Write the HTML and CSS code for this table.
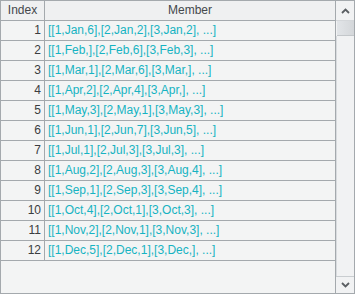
FILE: index.html
```html
<!DOCTYPE html>
<html>
<head>
<meta charset="utf-8">
<link rel="stylesheet" href="styles.css">
</head>
<body>
<div class="frame">
  <div class="table">
    <div class="row head"><div class="c idx">Index</div><div class="c mem">Member</div></div>
    <div class="row"><div class="c idx">1</div><div class="c mem">[[1,Jan,6],[2,Jan,2],[3,Jan,2], ...]</div></div>
    <div class="row"><div class="c idx">2</div><div class="c mem">[[1,Feb,],[2,Feb,6],[3,Feb,3], ...]</div></div>
    <div class="row"><div class="c idx">3</div><div class="c mem">[[1,Mar,1],[2,Mar,6],[3,Mar,], ...]</div></div>
    <div class="row"><div class="c idx">4</div><div class="c mem">[[1,Apr,2],[2,Apr,4],[3,Apr,], ...]</div></div>
    <div class="row"><div class="c idx">5</div><div class="c mem">[[1,May,3],[2,May,1],[3,May,3], ...]</div></div>
    <div class="row"><div class="c idx">6</div><div class="c mem">[[1,Jun,1],[2,Jun,7],[3,Jun,5], ...]</div></div>
    <div class="row"><div class="c idx">7</div><div class="c mem">[[1,Jul,1],[2,Jul,3],[3,Jul,3], ...]</div></div>
    <div class="row"><div class="c idx">8</div><div class="c mem">[[1,Aug,2],[2,Aug,3],[3,Aug,4], ...]</div></div>
    <div class="row"><div class="c idx">9</div><div class="c mem">[[1,Sep,1],[2,Sep,3],[3,Sep,4], ...]</div></div>
    <div class="row"><div class="c idx">10</div><div class="c mem">[[1,Oct,4],[2,Oct,1],[3,Oct,3], ...]</div></div>
    <div class="row"><div class="c idx">11</div><div class="c mem">[[1,Nov,2],[2,Nov,1],[3,Nov,3], ...]</div></div>
    <div class="row"><div class="c idx">12</div><div class="c mem">[[1,Dec,5],[2,Dec,1],[3,Dec,], ...]</div></div>
    <div class="filler"></div>
  </div>
  <div class="scroll">
    <div class="btn up"><svg width="9" height="6" viewBox="0 0 9 6"><path d="M1 5 L4.5 1.5 L8 5" fill="none" stroke="#5a5e62" stroke-width="1.8"/></svg></div>
    <div class="thumb"></div>
    <div class="track"></div>
    <div class="btn down"><svg width="9" height="6" viewBox="0 0 9 6"><path d="M1 1 L4.5 4.5 L8 1" fill="none" stroke="#5a5e62" stroke-width="1.8"/></svg></div>
  </div>
</div>
</body>
</html>
```

FILE: styles.css
```css
html, body {
  margin: 0;
  padding: 0;
  background: #f3f4f4;
}
.frame {
  display: flex;
  width: 355px;
  height: 294px;
  box-sizing: border-box;
  border: 1px solid #a4a9ad;
  background: #f3f4f4;
  font-family: "Liberation Sans", Arial, sans-serif;
  font-size: 12px;
}
.table {
  width: 335px;
  display: flex;
  flex-direction: column;
  border-right: 1px solid #a4a9ad;
}
.row {
  display: grid;
  grid-template-columns: 44px 1fr;
  height: 20px;
  box-sizing: border-box;
  border-bottom: 1px solid #a4a9ad;
}
.head {
  background: #eff0f1;
}
.c {
  line-height: 19px;
  white-space: nowrap;
  overflow: hidden;
}
.idx {
  text-align: right;
  padding-right: 3px;
  border-right: 1px solid #a4a9ad;
  color: #3a3d40;
}
.mem {
  padding-left: 3px;
  color: #16b3c2;
}
.head .c {
  text-align: center;
  color: #44484c;
  padding: 0;
}
.filler {
  flex: 1;
}
.scroll {
  width: 18px;
  display: flex;
  flex-direction: column;
  background: #f1f2f3;
}
.btn {
  height: 19px;
  display: flex;
  align-items: center;
  justify-content: center;
  background: #f1f2f3;
}
.btn.up {
  border-bottom: 1px solid #d4d7da;
}
.btn.down {
  height: 16px;
  border-top: 1px solid #c9cdd0;
}
.thumb {
  height: 14px;
  margin-left: 1px;
  background: linear-gradient(to right, #e2e5e8, #d4d7da);
  border-bottom: 1px solid #c3c7ca;
}
.track {
  flex: 1;
  border-left: 1px solid #d8dbde;
}
```
